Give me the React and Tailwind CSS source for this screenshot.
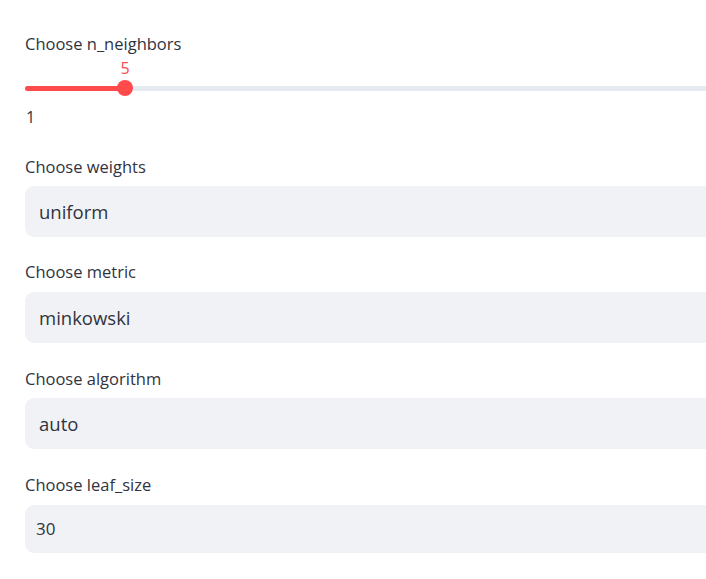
const Label = ({ children, className = '' }) => (
  <div className={`h-[24px] leading-[24px] text-[16.5px] text-[#31333f] ${className}`}>{children}</div>
);

const SelectBox = ({ value, className = '' }) => (
  <div className={`h-[51px] rounded-l-[9px] bg-[#f0f2f6] flex items-center pl-[14px] text-[18.5px] text-[#31333f] ${className}`}>
    {value}
  </div>
);

export default function App() {
  return (
    <div className="w-[706px] h-[579px] bg-white overflow-hidden font-['Open_Sans',sans-serif]">
      <div className="pl-[25px] pt-[32px]">
        {/* slider */}
        <Label>Choose n_neighbors</Label>
        <div className="relative h-[20px] mt-[2px]">
          <span className="absolute left-[100px] w-[1px] -translate-x-1/2 top-0 leading-[20px] text-[16px] text-[#ff4b4b] flex justify-center">5</span>
        </div>
        <div className="relative h-[20px] flex items-center">
          <div className="w-full h-[5px] rounded-l-full bg-[#e6eaf1]">
            <div className="w-[100px] h-full rounded-full bg-[#ff4b4b]" />
          </div>
          <div className="absolute left-[92px] top-[2px] w-[16px] h-[16px] rounded-full bg-[#ff4b4b]" />
        </div>
        <div className="h-[22px] leading-[22px] mt-[8px] text-[16px] text-[#31333f] pl-[1px]">1</div>

        <Label className="mt-[27px]">Choose weights</Label>
        <SelectBox value="uniform" className="mt-[7px]" />

        <Label className="mt-[23px]">Choose metric</Label>
        <SelectBox value="minkowski" className="mt-[8px]" />

        <Label className="mt-[24px]">Choose algorithm</Label>
        <SelectBox value="auto" className="mt-[7px]" />

        <Label className="mt-[24px]">Choose leaf_size</Label>
        <div className="mt-[8px] h-[48px] rounded-l-[9px] bg-[#f0f2f6] flex items-center pl-[11px] text-[17px] text-[#31333f]">
          30
        </div>
      </div>
    </div>
  );
}
